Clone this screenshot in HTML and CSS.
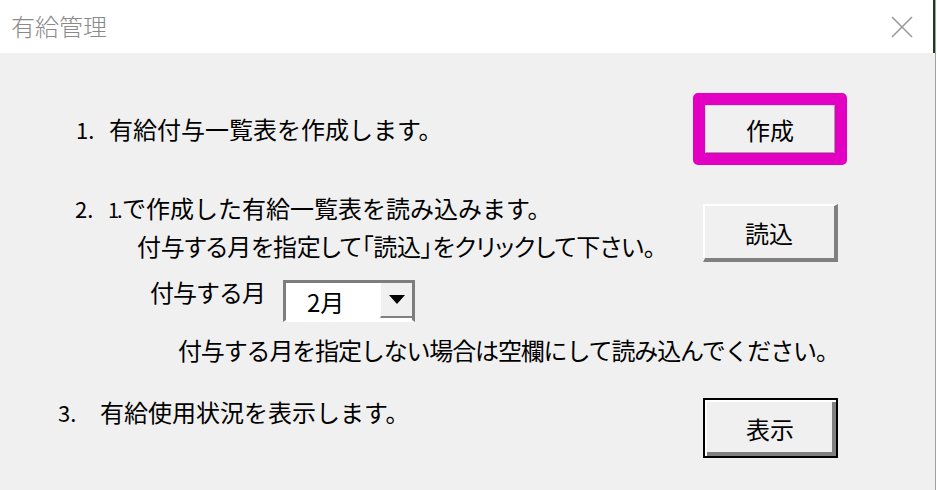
FILE: index.html
```html
<!DOCTYPE html>
<html lang="ja">
<head>
    <meta charset="UTF-8">
    <title>有給管理</title>
    <link rel="stylesheet" href="styles.css">
</head>
<body>
    <div class="window">
        <div class="title-bar">
            <div class="title">有給管理</div>
            <button class="close-btn" aria-label="閉じる">
                <svg width="22" height="22" viewBox="0 0 22 22"><path d="M1 1 L21 21 M21 1 L1 21" stroke="#9a9a9a" stroke-width="1.6" fill="none"/></svg>
            </button>
        </div>

        <div class="form">
            <div class="section sec-create">
                <div class="left">
                    <div class="line step1"><span class="num">1.</span>有給付与一覧表を作成します。</div>
                </div>
                <div class="right">
                    <div class="focus-ring"><button class="btn btn-flat">作成</button></div>
                </div>
            </div>

            <div class="section sec-read">
                <div class="left">
                    <div class="line step2"><span class="num">2.</span><span class="ref">1.</span>で作成した有給一覧表を読み込みます。</div>
                    <div class="line hint">付与する月を指定して「読込」をクリックして下さい。</div>
                    <div class="month-row">
                        <span class="month-label">付与する月</span>
                        <div class="combo">
                            <span class="combo-value">2月</span>
                            <span class="combo-arrow"><svg width="16" height="9" viewBox="0 0 16 9"><path d="M0 0 H16 L8 9 Z" fill="#000"/></svg></span>
                        </div>
                    </div>
                    <div class="line note">付与する月を指定しない場合は空欄にして読み込んでください。</div>
                </div>
                <div class="right">
                    <button class="btn btn-read">読込</button>
                </div>
            </div>

            <div class="section sec-show">
                <div class="left">
                    <div class="line step3"><span class="num">3.</span>有給使用状況を表示します。</div>
                </div>
                <div class="right">
                    <button class="btn btn-default">表示</button>
                </div>
            </div>
        </div>
    </div>
</body>
</html>
```

FILE: styles.css
```css
body {
    margin: 0;
    background: #fff;
    font-family: "Noto Sans CJK JP", "Noto Sans", sans-serif;
    color: #000;
}

.window {
    width: 935px;
    height: 490px;
    border-right: 1px solid #a0a0a0;
    background: #f0f0f0;
    overflow: hidden;
}

.title-bar {
    height: 53px;
    background: #fff;
    display: flex;
    align-items: center;
    justify-content: space-between;
    padding: 0 0 0 11px;
    box-shadow: inset -2px 0 0 #1d3b1d;
}

.title {
    font-size: 24px;
    font-weight: 300;
    color: #8a8a8a;
    margin-top: -3px;
}

.close-btn {
    background: transparent;
    border: none;
    padding: 0;
    margin-right: 22px;
    margin-top: 1px;
    width: 22px;
    height: 22px;
}

.form {
    padding-top: 40px;
}

.section {
    display: flex;
}

.left {
    flex: 1;
    min-width: 0;
}

.right {
    width: 154px;
    margin-right: 88px;
    display: flex;
    justify-content: center;
    align-items: flex-start;
}

.line {
    font-size: 24px;
    line-height: 36px;
    white-space: nowrap;
}

.num {
    display: inline-block;
    font-size: 22px;
}

/* 1. */
.sec-create {
    height: 72px;
    align-items: center;
}

.step1 {
    padding-left: 76px;
}

.step1 .num {
    width: 33px;
}

.focus-ring {
    border: 12px solid #e300c2;
    border-radius: 5px;
    width: 130px;
    height: 48px;
}

.btn {
    font-family: "Noto Sans CJK JP", "Noto Sans", sans-serif;
    font-size: 24px;
    color: #000;
    background: #f0f0f0;
    padding: 0;
    cursor: pointer;
}

.btn-flat {
    width: 130px;
    height: 48px;
    border: 1px solid #d8d8d8;
    border-right-color: #a0a0a0;
    border-bottom-color: #a0a0a0;
}

/* 2. */
.sec-read {
    margin-top: 25px;
}

.step2 {
    padding-left: 75px;
}

.step2 .num {
    width: 33px;
}

.step2 .ref {
    display: inline-block;
    width: 14px;
    font-size: 20px;
    letter-spacing: -2px;
}

.hint {
    padding-left: 137px;
    font-feature-settings: "palt";
    letter-spacing: -0.25px;
}

.btn-read {
    margin-top: 14px;
    width: 135px;
    height: 58px;
    border-style: solid;
    border-width: 2px 4px 4px 2px;
    border-color: #fff #808080 #808080 #fff;
}

.month-row {
    display: flex;
    align-items: flex-start;
    margin-top: 16px;
    padding-left: 150px;
}

.month-label {
    font-size: 24px;
    line-height: 24px;
    letter-spacing: -1px;
    width: 133px;
}

.combo {
    width: 126px;
    height: 37px;
    background: #fff;
    border: 3px solid #7d7d7d;
    border-bottom: 2px solid #fff;
    display: flex;
    align-items: stretch;
    justify-content: space-between;
}

.combo-value {
    font-size: 24px;
    line-height: 38px;
    padding-left: 21px;
}

.combo-arrow {
    width: 31px;
    height: 33px;
    background: #f0f0f0;
    border-left: 1px solid #fff;
    border-bottom: 2px solid #808080;
    display: flex;
    align-items: center;
    justify-content: center;
}

.note {
    padding-left: 178px;
    margin-top: 10px;
    letter-spacing: -1.15px;
}

/* 3. */
.sec-show {
    margin-top: 26px;
}

.step3 {
    padding-left: 58px;
}

.step3 .num {
    width: 42px;
}

.btn-default {
    margin-top: 4px;
    width: 135px;
    height: 60px;
    border: 2px solid #000;
    box-shadow: inset 2px 2px 0 #fff, inset -4px -4px 0 #808080;
}
```
